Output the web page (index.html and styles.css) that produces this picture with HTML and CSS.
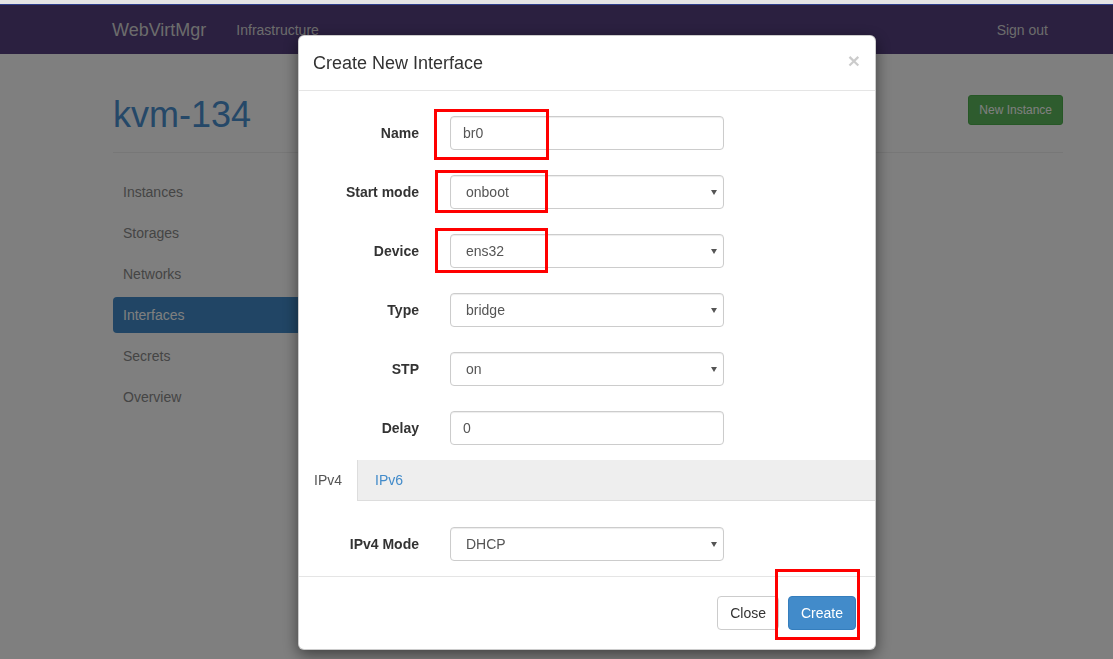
FILE: index.html
```html
<!DOCTYPE html>
<html lang="en">
<head>
<meta charset="utf-8">
<title>WebVirtMgr - Interfaces</title>
<link rel="stylesheet" href="styles.css">
</head>
<body>
<div class="chrome"></div>
<nav class="navbar">
  <div class="nav-inner">
    <a class="brand">WebVirtMgr</a>
    <a class="nav-link">Infrastructure</a>
    <a class="nav-link signout">Sign out</a>
  </div>
</nav>

<main class="container">
  <div class="page-header">
    <h1>kvm-134</h1>
    <button class="btn btn-success btn-sm">New Instance</button>
  </div>
  <div class="layout">
    <ul class="sidebar">
      <li><a>Instances</a></li>
      <li><a>Storages</a></li>
      <li><a>Networks</a></li>
      <li class="active"><a>Interfaces</a></li>
      <li><a>Secrets</a></li>
      <li><a>Overview</a></li>
    </ul>
    <div class="content"></div>
  </div>
</main>

<div class="backdrop"></div>

<div class="modal">
  <div class="modal-header">
    <h4 class="modal-title">Create New Interface</h4>
    <span class="close">&times;</span>
  </div>
  <div class="modal-body">
    <div class="form-row">
      <label>Name</label>
      <input class="form-control" type="text" value="br0">
    </div>
    <div class="form-row">
      <label>Start mode</label>
      <div class="select"><select class="form-control"><option>onboot</option></select></div>
    </div>
    <div class="form-row">
      <label>Device</label>
      <div class="select"><select class="form-control"><option>ens32</option></select></div>
    </div>
    <div class="form-row">
      <label>Type</label>
      <div class="select"><select class="form-control"><option>bridge</option></select></div>
    </div>
    <div class="form-row">
      <label>STP</label>
      <div class="select"><select class="form-control"><option>on</option></select></div>
    </div>
    <div class="form-row form-row-last">
      <label>Delay</label>
      <input class="form-control" type="text" value="0">
    </div>

    <ul class="tabs">
      <li class="active"><a>IPv4</a></li>
      <li><a>IPv6</a></li>
    </ul>
    <div class="tab-content">
      <div class="form-row form-row-last">
        <label>IPv4 Mode</label>
        <div class="select"><select class="form-control"><option>DHCP</option></select></div>
      </div>
    </div>
  </div>
  <div class="modal-footer">
    <button class="btn btn-default">Close</button>
    <button class="btn btn-primary">Create</button>
  </div>
</div>

<div class="mark mark-name"></div>
<div class="mark mark-start"></div>
<div class="mark mark-device"></div>
<div class="mark mark-create"></div>
</body>
</html>
```

FILE: styles.css
```css
html, body {
  margin: 0;
  height: 100%;
}

body {
  font-family: "Liberation Sans", Arial, Helvetica, sans-serif;
  font-size: 14px;
  line-height: 20px;
  color: #333;
  background: #fff;
  overflow: hidden;
}

.chrome {
  position: relative;
  z-index: 20;
  height: 4px;
  background: #e4e4e4;
  border-bottom: 1px solid #2f3f8c;
}

.navbar {
  height: 49px;
  background: #564080;
  display: flex;
}

.nav-inner {
  margin-left: 112px;
  width: 951px;
  display: flex;
  align-items: center;
}

.brand {
  font-size: 18px;
  color: #d8d8d8;
  padding-right: 15px;
}

.nav-link {
  padding: 0 15px;
  color: #d8d8d8;
}

.signout {
  margin-left: auto;
}

.container {
  margin-left: 113px;
  width: 950px;
}

.page-header {
  display: flex;
  justify-content: space-between;
  align-items: flex-start;
  margin-top: 41px;
  padding-bottom: 17px;
  border-bottom: 1px solid #eee;
}

h1 {
  margin: 0;
  font-size: 36px;
  font-weight: normal;
  line-height: 1.1;
  color: #4a90d0;
}

.btn {
  font-family: inherit;
  display: inline-block;
  height: 34px;
  padding: 6px 12px;
  font-size: 14px;
  line-height: 20px;
  border: 1px solid transparent;
  border-radius: 4px;
  cursor: pointer;
}

.btn-sm {
  height: 30px;
  padding: 5px 10px;
  font-size: 12px;
  line-height: 18px;
  border-radius: 3px;
}

.btn-success {
  background: #5cb85c;
  border-color: #4cae4c;
  color: #fff;
}

.btn-default {
  background: #fff;
  border-color: #ccc;
  color: #333;
}

.btn-primary {
  background: #428bca;
  border-color: #357ebd;
  color: #fff;
}

.layout {
  display: flex;
  margin-top: 21px;
}

.sidebar {
  list-style: none;
  margin: 0;
  padding: 0;
  width: 238px;
}

.sidebar li + li {
  margin-top: 5px;
}

.sidebar a {
  display: block;
  padding: 8px 10px;
  line-height: 20px;
  color: #8a8a8a;
  border-radius: 4px;
}

.sidebar .active a {
  background: #428bca;
  color: #fff;
}

.backdrop {
  position: fixed;
  inset: 0;
  background: rgba(0, 0, 0, 0.5);
  z-index: 10;
}

.modal {
  position: fixed;
  left: 298px;
  top: 35px;
  width: 578px;
  box-sizing: border-box;
  background: #fff;
  border: 1px solid rgba(0, 0, 0, 0.2);
  border-radius: 6px;
  box-shadow: 0 5px 15px rgba(0, 0, 0, 0.5);
  z-index: 30;
}

.modal-header {
  display: flex;
  justify-content: space-between;
  align-items: center;
  padding: 15px 15px 15px 14px;
  border-bottom: 1px solid #e5e5e5;
}

.modal-title {
  margin: 0;
  font-size: 18px;
  line-height: 24px;
  font-weight: normal;
  color: #333;
}

.close {
  font-size: 21px;
  font-weight: bold;
  line-height: 1;
  color: #000;
  opacity: 0.2;
  margin-top: -6px;
}

.modal-body {
  padding: 25px 20px 15px;
}

.form-row {
  display: grid;
  grid-template-columns: 100px 274px;
  column-gap: 31px;
  align-items: center;
  margin-bottom: 25px;
}

.form-row.form-row-last {
  margin-bottom: 0;
}

.form-row label {
  text-align: right;
  font-weight: bold;
  color: #333;
}

.form-control {
  font-family: inherit;
  display: block;
  width: 100%;
  height: 34px;
  box-sizing: border-box;
  padding: 6px 12px;
  font-size: 14px;
  line-height: 20px;
  color: #555;
  background: #fff;
  border: 1px solid #ccc;
  border-radius: 4px;
  box-shadow: inset 0 1px 1px rgba(0, 0, 0, 0.075);
  outline: none;
}

.select {
  position: relative;
}

.select select {
  appearance: none;
  -webkit-appearance: none;
  padding-left: 15px;
}

.select::after {
  content: "";
  position: absolute;
  right: 7px;
  top: 50%;
  margin-top: -2px;
  border-left: 3.5px solid transparent;
  border-right: 3.5px solid transparent;
  border-top: 5px solid #555;
  pointer-events: none;
}

.tabs {
  list-style: none;
  display: flex;
  margin: 15px -20px 0;
  padding: 0;
  background: #eee;
  border-bottom: 1px solid #ddd;
}

.tabs li {
  margin-bottom: -1px;
}

.tabs li + li {
  margin-left: 2px;
}

.tabs a {
  display: block;
  padding: 10px 15px;
  line-height: 20px;
  color: #428bca;
  border-right: 1px solid transparent;
}

.tabs .active a {
  background: #fff;
  color: #555;
  border-right-color: #ddd;
  padding-bottom: 11px;
}

.tab-content {
  padding-top: 26px;
}

.modal-footer {
  display: flex;
  justify-content: flex-end;
  gap: 9px;
  padding: 19px 19px 19px 20px;
  border-top: 1px solid #e5e5e5;
}

.mark {
  position: absolute;
  box-sizing: border-box;
  border: 3px solid #f00;
  z-index: 40;
}

.mark-name {
  left: 434px;
  top: 109px;
  width: 115px;
  height: 51px;
}

.mark-start {
  left: 435px;
  top: 170px;
  width: 113px;
  height: 43px;
}

.mark-device {
  left: 435px;
  top: 228px;
  width: 113px;
  height: 45px;
}

.mark-create {
  left: 775px;
  top: 569px;
  width: 85px;
  height: 71px;
}
```
